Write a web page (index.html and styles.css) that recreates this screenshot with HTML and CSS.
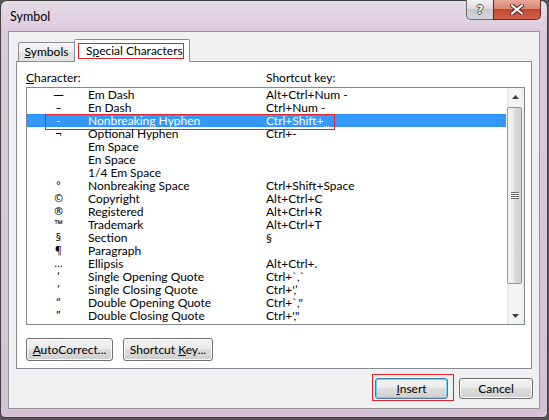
FILE: index.html
```html
<!DOCTYPE html>
<html lang="en">

<head>
    <meta charset="UTF-8">
    <meta name="viewport" content="width=device-width, initial-scale=1.0">
    <title>Symbol</title>
    <link rel="stylesheet" href="styles.css">
</head>

<body>
    <div class="window">
        <div class="titlebar">
            <span class="title">Symbol</span>
            <div class="caption">
                <span class="cap-btn help">?</span>
                <span class="cap-btn close">
                    <svg width="14" height="11" viewBox="0 0 14 11">
                        <path d="M2 1.5 L12 9.5 M12 1.5 L2 9.5" stroke="#4a1a14" stroke-width="4" stroke-linecap="square" />
                        <path d="M2 1.5 L12 9.5 M12 1.5 L2 9.5" stroke="#ffffff" stroke-width="2.2" stroke-linecap="square" />
                    </svg>
                </span>
            </div>
        </div>

        <div class="client">
            <div class="tabs">
                <div class="tab"><u>S</u>ymbols</div>
                <div class="tab active"><span class="mark-tab">S<u>p</u>ecial Characters</span></div>
            </div>

            <div class="panel">
                <div class="heads">
                    <span><u>C</u>haracter:</span>
                    <span>Shortcut key:</span>
                </div>

                <div class="listbox">
                    <div class="rows">
                        <div class="row"><span class="ch">—</span><span>Em Dash</span><span>Alt+Ctrl+Num -</span></div>
                        <div class="row"><span class="ch">–</span><span>En Dash</span><span>Ctrl+Num -</span></div>
                        <div class="row selected">
                            <span class="ch">-</span><span>Nonbreaking Hyphen</span><span>Ctrl+Shift+_</span>
                            <span class="mark-row"></span>
                        </div>
                        <div class="row"><span class="ch">¬</span><span>Optional Hyphen</span><span>Ctrl+-</span></div>
                        <div class="row"><span class="ch"></span><span>Em Space</span><span></span></div>
                        <div class="row"><span class="ch"></span><span>En Space</span><span></span></div>
                        <div class="row"><span class="ch"></span><span>1/4 Em Space</span><span></span></div>
                        <div class="row"><span class="ch">°</span><span>Nonbreaking Space</span><span>Ctrl+Shift+Space</span></div>
                        <div class="row"><span class="ch">©</span><span>Copyright</span><span>Alt+Ctrl+C</span></div>
                        <div class="row"><span class="ch">®</span><span>Registered</span><span>Alt+Ctrl+R</span></div>
                        <div class="row"><span class="ch">™</span><span>Trademark</span><span>Alt+Ctrl+T</span></div>
                        <div class="row"><span class="ch">§</span><span>Section</span><span>§</span></div>
                        <div class="row"><span class="ch">¶</span><span>Paragraph</span><span></span></div>
                        <div class="row"><span class="ch">…</span><span>Ellipsis</span><span>Alt+Ctrl+.</span></div>
                        <div class="row"><span class="ch">‘</span><span>Single Opening Quote</span><span>Ctrl+`,`</span></div>
                        <div class="row"><span class="ch">’</span><span>Single Closing Quote</span><span>Ctrl+',’</span></div>
                        <div class="row"><span class="ch">“</span><span>Double Opening Quote</span><span>Ctrl+`,"</span></div>
                        <div class="row"><span class="ch">”</span><span>Double Closing Quote</span><span>Ctrl+',"</span></div>
                    </div>

                    <div class="scrollbar">
                        <div class="sb-arrow">
                            <svg width="7" height="4" viewBox="0 0 7 4"><polygon points="0,4 3.5,0 7,4" fill="#3d3d3d" /></svg>
                        </div>
                        <div class="sb-track">
                            <div class="thumb">
                                <svg width="8" height="7" viewBox="0 0 8 7">
                                    <path d="M0 0.5 H8 M0 2.5 H8 M0 4.5 H8 M0 6.5 H8" stroke="#6b6b6b" stroke-width="1" />
                                    <path d="M0 1.5 H8 M0 3.5 H8 M0 5.5 H8" stroke="#ffffff" stroke-width="1" />
                                </svg>
                            </div>
                        </div>
                        <div class="sb-arrow">
                            <svg width="7" height="4" viewBox="0 0 7 4"><polygon points="0,0 7,0 3.5,4" fill="#3d3d3d" /></svg>
                        </div>
                    </div>
                </div>

                <div class="panel-btns">
                    <button class="btn btn-auto"><u>A</u>utoCorrect...</button>
                    <button class="btn btn-key">Shortcut <u>K</u>ey...</button>
                </div>
            </div>

            <div class="actions">
                <span class="mark-btn"><button class="btn btn-default"><u>I</u>nsert</button></span>
                <button class="btn btn-cancel">Cancel</button>
            </div>
        </div>
    </div>
</body>

</html>
```

FILE: styles.css
```css
body {
    margin: 0;
    background: #555555;
    font-family: Lato, "Noto Sans", sans-serif;
    font-size: 12px;
    color: #000;
}

/* window frame */
.window {
    width: 548px;
    height: 418px;
    box-sizing: border-box;
    border: 1px solid #404040;
    border-radius: 7px 7px 5px 5px;
    background: linear-gradient(180deg, #e7dbe7 0, #dccadc 32px, #d6c2d6 100%);
    white-space: nowrap;
}

.titlebar {
    height: 30px;
    display: flex;
    justify-content: space-between;
    align-items: flex-start;
}

.title {
    margin: 8px 0 0 9px;
    line-height: 15px;
    font-size: 12.5px;
}

.caption {
    display: flex;
    margin: -1px 6px 0 0;
}

.cap-btn {
    height: 20px;
    box-sizing: border-box;
    display: flex;
    justify-content: center;
    align-items: center;
    border: 1px solid #6a6a6a;
    border-top: none;
}

.help {
    width: 27px;
    border-right: none;
    border-radius: 0 0 0 5px;
    background: linear-gradient(180deg, #f1f1f3 0%, #dcdde1 45%, #c6c9ce 50%, #d3d6db 100%);
    color: #f6f6f6;
    font-family: "DejaVu Sans", sans-serif;
    font-weight: bold;
    font-size: 12px;
    text-shadow: 1px 0 0 #505050, -1px 0 0 #505050, 0 1px 0 #505050, 0 -1px 0 #505050;
}

.close {
    width: 48px;
    border-color: #5b2a24;
    border-radius: 0 0 5px 0;
    background: linear-gradient(180deg, #e9a999 0%, #da8673 45%, #c4462f 50%, #d0634a 100%);
}

/* client area */
.client {
    margin: 0 7px;
    height: 378px;
    box-sizing: border-box;
    border: 1px solid #98959a;
    background: #f0f0f0;
    padding: 7px 7px 0;
}

.tabs {
    display: flex;
    align-items: flex-end;
    height: 22px;
    position: relative;
    z-index: 1;
}

.tab {
    box-sizing: border-box;
    border: 1px solid #898c95;
    border-bottom: none;
    line-height: 15px;
    text-align: center;
}

.tab:first-child {
    width: 57px;
    height: 19px;
    margin-left: 2px;
    padding-top: 1px;
    border-radius: 2px 0 0 0;
    background: linear-gradient(180deg, #f6f6f6 0%, #ececec 50%, #e0e0e0 51%, #e4e4e4 100%);
}

.tab.active {
    width: 116px;
    height: 23px;
    margin: 0 0 -1px -1px;
    padding: 3px 0 0 3px;
    text-align: left;
    border-radius: 2px 2px 0 0;
    background: #fff;
}

.mark-tab {
    display: inline-block;
    width: 106px;
    box-sizing: border-box;
    padding-left: 7px;
    line-height: 14px;
    border: 1px solid #e5222b;
}

.panel {
    height: 308px;
    box-sizing: border-box;
    border: 1px solid #898c95;
    background: #fff;
    padding: 8px 6px 0 9px;
}

.heads {
    display: grid;
    grid-template-columns: 240px 1fr;
    line-height: 15px;
    margin-bottom: 2px;
}

/* list of special characters */
.listbox {
    display: flex;
    width: 499px;
    height: 238px;
    box-sizing: border-box;
    border: 1px solid #828790;
}

.rows {
    flex: 1;
}

.row {
    position: relative;
    display: grid;
    grid-template-columns: 61px 178px 1fr;
    height: 13px;
    line-height: 13px;
    margin-right: 1px;
}

.row .ch {
    padding-left: 2px;
    text-align: center;
    font-family: "Noto Sans", sans-serif;
    font-size: 10.5px;
}

.row.selected {
    background: #3399ff;
    color: #fff;
    outline: 1px dotted #cc6600;
    outline-offset: -1px;
}

.mark-row {
    position: absolute;
    left: 18px;
    top: 0;
    width: 290px;
    height: 16px;
    box-sizing: border-box;
    border: 1px solid #e5222b;
}

.scrollbar {
    width: 17px;
    display: flex;
    flex-direction: column;
    background: linear-gradient(90deg, #e6e6e6 0, #f4f4f4 3px, #f4f4f4 13px, #e9e9e9 100%);
}

.sb-arrow {
    height: 17px;
    display: flex;
    justify-content: center;
    align-items: center;
}

.sb-track {
    flex: 1;
    padding-top: 2px;
}

.thumb {
    width: 15px;
    height: 177px;
    box-sizing: border-box;
    border: 1px solid #979797;
    border-radius: 2px;
    background: linear-gradient(90deg, #f4f4f4 0%, #e9e9e9 45%, #d9d9d9 50%, #d2d2d2 100%);
    display: flex;
    justify-content: center;
    align-items: center;
}

/* buttons */
.btn {
    height: 23px;
    box-sizing: border-box;
    padding: 0;
    font-family: inherit;
    font-size: 12px;
    color: #000;
    border: 1px solid #707070;
    border-radius: 3px;
    background: linear-gradient(180deg, #f2f2f2 0%, #ebebeb 49%, #dddddd 50%, #cfcfcf 100%);
    box-shadow: inset 0 0 0 1px #fbfbfb;
}

.panel-btns {
    display: flex;
    gap: 10px;
    margin-top: 13px;
}

.btn-auto {
    width: 87px;
}

.btn-key {
    width: 90px;
}

.actions {
    display: flex;
    justify-content: flex-end;
    align-items: flex-start;
    margin: 5px -1px 0 0;
}

.mark-btn {
    display: flex;
    border: 1px solid #e5222b;
    padding: 3px 5px 1px 2px;
}

.btn-default {
    width: 73px;
    height: 21px;
    border-color: #3c7fb1;
    box-shadow: inset 0 0 0 1px #6fd1f5;
}

.btn-cancel {
    width: 74px;
    height: 21px;
    margin: 4px 0 0 5px;
}
```
